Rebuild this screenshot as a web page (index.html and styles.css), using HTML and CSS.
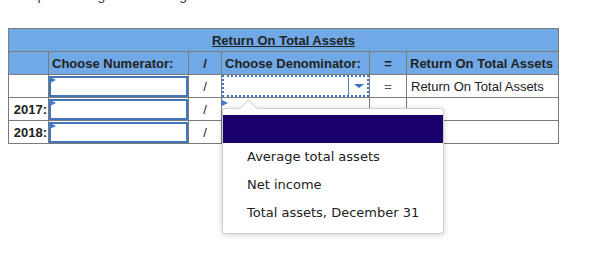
FILE: index.html
```html
<!DOCTYPE html>
<html>
<head>
<meta charset="utf-8">
<link rel="stylesheet" href="styles.css">
</head>
<body>
<div class="intro">Complete using the following</div>
<div class="wrap">
<table class="ratio">
  <colgroup>
    <col class="c1"><col class="c2"><col class="c3"><col class="c4"><col class="c5"><col class="c6">
  </colgroup>
  <tr class="hdr">
    <th colspan="6" class="title"><span>Return On Total Assets</span></th>
  </tr>
  <tr class="hdr">
    <th></th>
    <th class="left">Choose Numerator:</th>
    <th class="mid">/</th>
    <th class="left">Choose Denominator:</th>
    <th class="mid">=</th>
    <th class="left">Return On Total Assets</th>
  </tr>
  <tr>
    <td></td>
    <td><div class="box"><i class="flag"></i></div></td>
    <td class="mid">/</td>
    <td><div class="sel"><span class="arrowbox"><i class="caret"></i></span></div></td>
    <td class="mid eq">=</td>
    <td class="txt">Return On Total Assets</td>
  </tr>
  <tr>
    <td class="yr">2017:</td>
    <td><div class="box"><i class="flag"></i></div></td>
    <td class="mid">/</td>
    <td><div class="plain"><i class="flag"></i></div></td>
    <td class="mid eq">=</td>
    <td></td>
  </tr>
  <tr>
    <td class="yr">2018:</td>
    <td><div class="box"><i class="flag"></i></div></td>
    <td class="mid">/</td>
    <td></td>
    <td></td>
    <td></td>
  </tr>
</table>
<div class="pop">
  <i class="notch"></i>
  <div class="hl"></div>
  <div class="opt">Average total assets</div>
  <div class="opt">Net income</div>
  <div class="opt">Total assets, December 31</div>
</div>
</div>
</body>
</html>
```
FILE: styles.css
```css
html, body { background: #fff; }
html { height: 100%; }
body {
  margin: 0 8px;
  min-height: 100%;
  font-family: "Liberation Sans", Arial, sans-serif;
  color: #222;
}
.intro {
  font-size: 14px;
  line-height: 16px;
  margin-top: -13px;
  padding-bottom: 25px;
  color: #444;
  white-space: nowrap;
}
.wrap { position: relative; height: 215px; }
.ratio {
  border-collapse: collapse;
  table-layout: fixed;
  font-size: 13px;
}
.c1 { width: 40px; }
.c2 { width: 140px; }
.c3 { width: 33px; }
.c4 { width: 148px; }
.c5 { width: 37px; }
.c6 { width: 152px; }
.ratio th, .ratio td {
  border: 1px solid #7b7b7b;
  height: 22px;
  padding: 0;
  vertical-align: middle;
}
.hdr th { background: #71a9e6; font-weight: bold; color: #222; }
.title span { text-decoration: underline; }
.left { text-align: left; padding-left: 3px !important; }
.mid { text-align: center; }
.eq { color: #555; }
.txt { padding-left: 4px !important; }
.yr { font-weight: bold; text-align: right; padding-right: 1px !important; }
.box {
  position: relative;
  height: 21px;
  box-sizing: border-box;
  border: 2px solid #4275b9;
}
.flag {
  position: absolute;
  left: -1px;
  top: -1px;
  width: 0; height: 0;
  border-top: 3px solid transparent;
  border-bottom: 3px solid transparent;
  border-left: 6px solid #3c7ad0;
}
.sel {
  height: 22px;
  box-sizing: border-box;
  border: 2px dotted #3c78cf;
  display: flex;
  justify-content: flex-end;
}
.arrowbox {
  width: 18px;
  border-left: 1px solid #4a7fc6;
  display: flex;
  align-items: center;
  justify-content: center;
}
.caret {
  width: 0; height: 0;
  border-left: 5px solid transparent;
  border-right: 5px solid transparent;
  border-top: 4px solid #3a6fc2;
  margin-left: 1px;
}
.plain { position: relative; height: 21px; }
.plain .flag { left: 0; top: 1px; }
.pop {
  position: absolute;
  left: 214px;
  top: 80px;
  width: 222px;
  box-sizing: border-box;
  padding: 6px 0 6px;
  background: #fff;
  border: 1px solid #cfcfcf;
  border-radius: 3px;
  box-shadow: 0 1px 6px rgba(0,0,0,0.18);
  font-family: "DejaVu Sans", Verdana, sans-serif;
  font-size: 13px;
  color: #222;
}
.notch {
  position: absolute;
  top: -7px;
  left: 19px;
  width: 12px; height: 12px;
  background: #fff;
  border-left: 1px solid #d4d4d4;
  border-top: 1px solid #d4d4d4;
  transform: rotate(45deg);
}
.hl {
  position: relative;
  height: 28px;
  background: #1a006b;
}
.opt {
  height: 28px;
  line-height: 28px;
  padding-left: 24px;
  white-space: nowrap;
}
```
